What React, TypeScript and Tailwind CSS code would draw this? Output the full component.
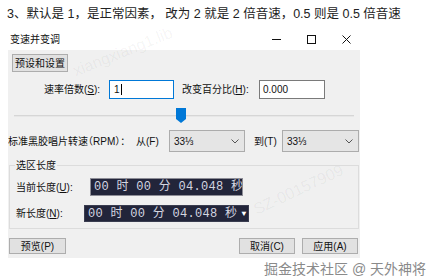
import React from "react";

const font = { fontFamily: '"Liberation Sans", "Noto Sans CJK SC", sans-serif' };
const mono = { fontFamily: '"Liberation Mono", "Noto Sans CJK SC", monospace' };

function Btn({ label, w }: { label: React.ReactNode; w: string }) {
  return (
    <div
      className={`${w} shrink-0 h-full border border-[#adadad] bg-[#e1e1e1] flex items-center justify-center text-[10px] text-[#111]`}
    >
      {label}
    </div>
  );
}

function Select({ w }: { w: string }) {
  return (
    <div className={`${w} shrink-0 h-full border border-[#acacac] bg-[#e5e5e5] flex items-center pl-[4px] pr-[5px] text-[10px] text-[#111]`}>
      <span>33⅓</span>
      <svg className="ml-auto" width="8" height="5" viewBox="0 0 8 5">
        <path d="M0.5 0.5 L4 4 L7.5 0.5" fill="none" stroke="#555" strokeWidth="1" />
      </svg>
    </div>
  );
}

export default function App() {
  return (
    <div className="w-[436px] h-[280px] bg-white relative overflow-hidden" style={font}>
      <div className="h-[28px] pl-[7px] pt-[5px] text-[12.5px] leading-[18px] text-[#222] whitespace-nowrap">
        3、默认是 1，是正常因素， 改为 2 就是 2 倍音速，0.5 则是 0.5 倍音速
      </div>

      <div className="ml-[8px] w-[352px]">
        {/* title bar */}
        <div className="h-[22px] flex items-center">
          <span className="pl-[2px] text-[10px] text-[#111]">变速并变调</span>
          <div className="flex-1" />
          <div className="flex mr-[-4px]">
            <div className="w-[35px] h-[22px] flex items-center justify-center">
              <div className="w-[9px] h-px bg-[#111]" />
            </div>
            <div className="w-[35px] h-[22px] flex items-center justify-center">
              <div className="w-[9px] h-[9px] border border-[#111]" />
            </div>
            <div className="w-[35px] h-[22px] flex items-center justify-center">
              <svg width="9" height="9" viewBox="0 0 9 9">
                <path d="M0.5 0.5 L8.5 8.5 M8.5 0.5 L0.5 8.5" stroke="#111" strokeWidth="1" />
              </svg>
            </div>
          </div>
        </div>

        {/* body */}
        <div className="h-[208px] bg-[#f0f0f0] flex flex-col text-[10px] text-[#111]">
          <div className="pt-[4px] pl-[4px] h-[22px] flex">
            <Btn label="预设和设置" w="w-[56px]" />
          </div>

          <div className="mt-[8px] h-[19px] flex items-center pl-[36px]">
            <span className="w-[65px] shrink-0">
              速率倍数(<span className="underline">S</span>):
            </span>
            <div className="w-[65px] shrink-0 h-full border border-[#0078d7] bg-white flex items-center pl-[4px] text-[10px]">
              1<span className="w-px h-[11px] bg-black ml-px" />
            </div>
            <span className="ml-[8px] w-[77px] shrink-0">
              改变百分比(<span className="underline">H</span>):
            </span>
            <div className="w-[66px] shrink-0 h-full border border-[#7a7a7a] bg-white flex items-center pl-[3px] text-[10px]">
              0.000
            </div>
          </div>

          <div className="mt-[9px] h-[15px] relative">
            <div className="absolute left-[6px] w-[340px] top-[7px] h-[2px] bg-[#d6d6d6] border-b border-[#e7e7e7]" />
            <svg className="absolute left-[168px] top-0" width="10" height="15" viewBox="0 0 10 15">
              <path d="M0 0 H10 V11 L5 15 L0 11 Z" fill="#0078d7" />
            </svg>
          </div>

          <div className="mt-[7px] h-[22px] flex items-center">
            <span className="w-[128px] shrink-0 whitespace-nowrap overflow-hidden" style={{ fontFeatureSettings: '"halt"' }}>
              标准黑胶唱片转速（RPM）：
            </span>
            <span className="w-[33px] shrink-0">从(F)</span>
            <Select w="w-[76px]" />
            <span className="ml-[9px] w-[28px] shrink-0">到(T)</span>
            <Select w="w-[77px]" />
          </div>

          <div className="mt-[13px] ml-[1px] w-[350px] h-[64px] border border-[#dcdcdc] relative pt-[12px] pl-[6px]">
            <span className="absolute left-[5px] top-[-7px] px-[1px] bg-[#f0f0f0] leading-[13px]">选区长度</span>
            <div className="h-[18px] flex items-center">
              <span className="w-[74px] shrink-0">
                当前长度(<span className="underline">U</span>):
              </span>
              <div
                className="w-[153px] shrink-0 h-full bg-[#22253a] border border-[#8d8d96] flex items-center pl-[3px] text-[12px] tracking-[0.3px] text-[#d4d6e0] whitespace-nowrap overflow-hidden"
                style={mono}
              >
                00 时 00 分 04.048 秒
              </div>
            </div>
            <div className="mt-[9px] h-[17px] flex items-center">
              <span className="w-[68px] shrink-0">
                新长度(<span className="underline">N</span>):
              </span>
              <div
                className="w-[165px] shrink-0 h-full bg-[#22253a] border border-[#3a3d50] flex items-center pl-[3px] text-[12px] tracking-[0.3px] text-[#d4d6e0] whitespace-nowrap overflow-hidden"
                style={mono}
              >
                00 时 00 分 04.048 秒
                <span className="ml-[4px] text-[8px] text-white">▼</span>
              </div>
            </div>
          </div>

          <div className="mt-[9px] h-[16px] flex pl-[1px]">
            <Btn label="预览(P)" w="w-[57px]" />
            <div className="flex-1" />
            <Btn label="取消(C)" w="w-[56px]" />
            <div className="w-[7px]" />
            <Btn label="应用(A)" w="w-[56px]" />
            <div className="w-[2px]" />
          </div>
        </div>
      </div>

      <div className="flex justify-end pr-[10px] mt-[2px]">
        <span className="text-[14px] leading-[18px] text-[#8a8a8a] whitespace-nowrap">掘金技术社区 @ 天外神将</span>
      </div>

      {/* faint watermarks */}
      <span className="absolute left-[70px] top-[40px] -rotate-[22deg] text-[16px] text-black/5 whitespace-nowrap pointer-events-none">
        xiangxiang1.lib
      </span>
      <span className="absolute left-[250px] top-[178px] -rotate-[25deg] text-[16px] text-black/5 whitespace-nowrap pointer-events-none">
        SZ-00157909
      </span>
    </div>
  );
}
